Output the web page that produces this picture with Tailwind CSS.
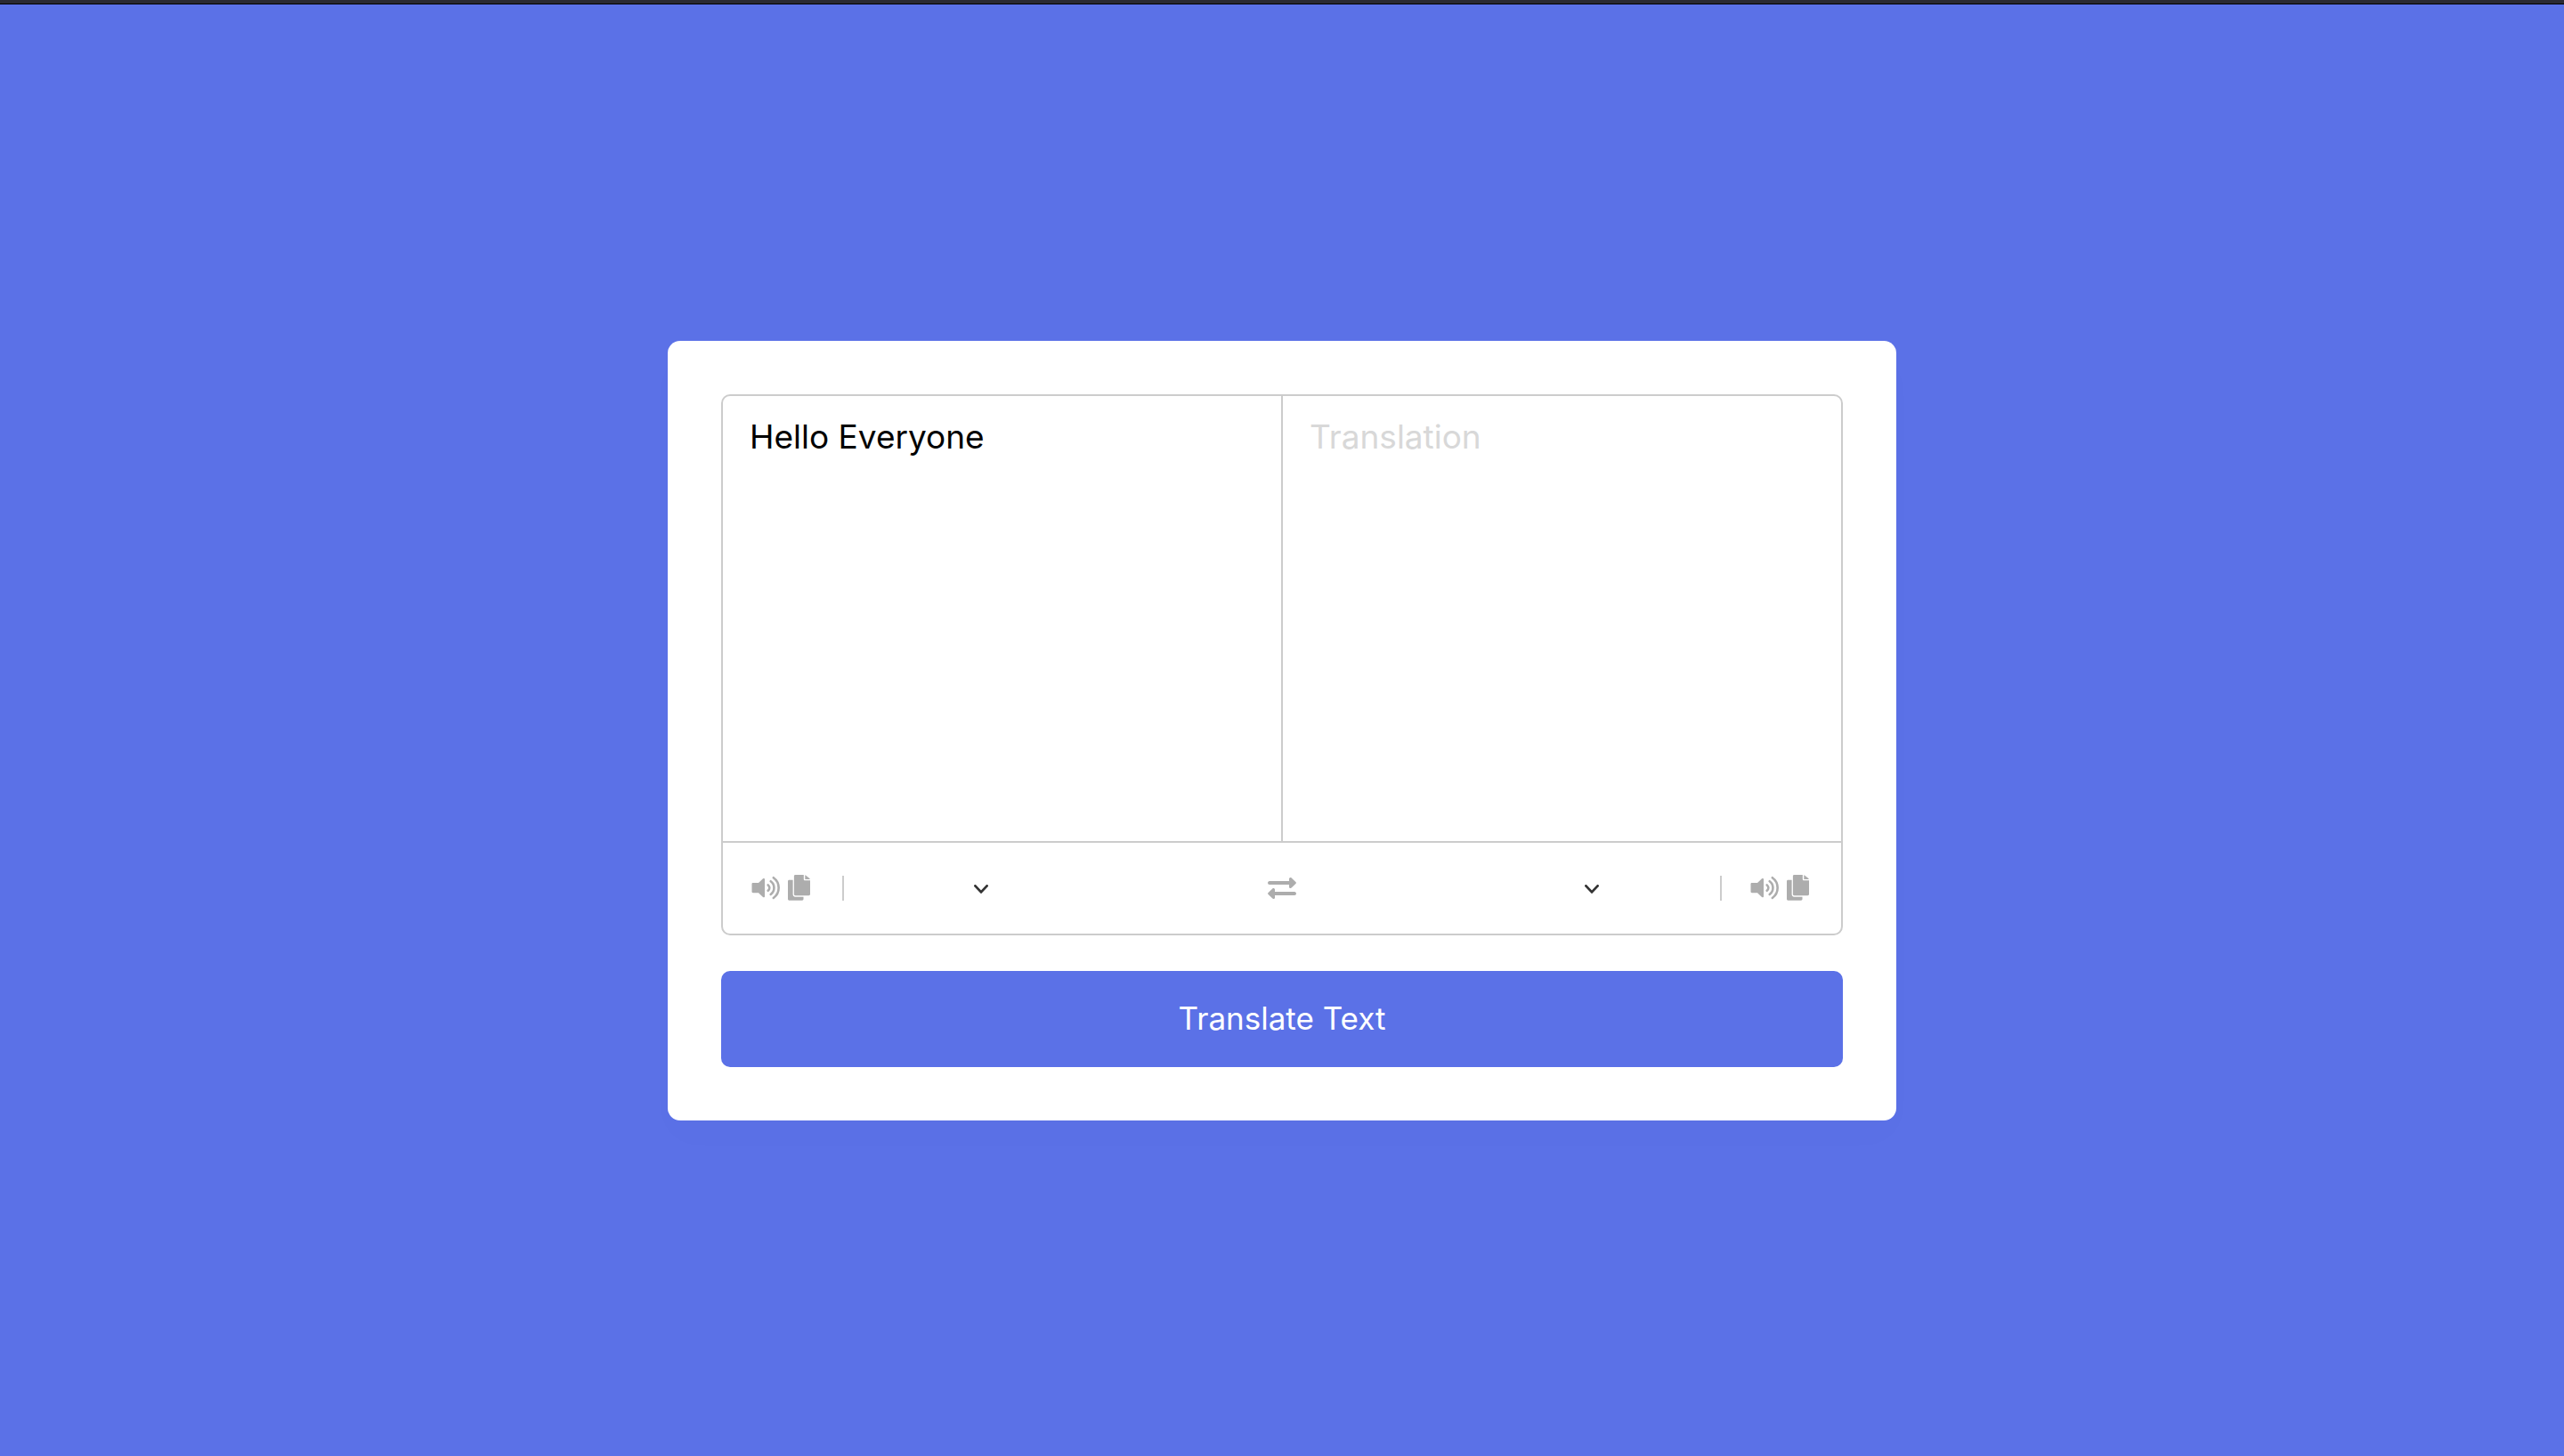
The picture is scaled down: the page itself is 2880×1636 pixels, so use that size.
<!DOCTYPE html>
<html lang="en">
<head>
<meta charset="utf-8">
<meta name="viewport" content="width=device-width, initial-scale=1">
<title>Translate Text</title>
<script src="https://cdn.jsdelivr.net/npm/@tailwindcss/browser@4"></script>
</head>
<body class="flex min-h-screen flex-col bg-[#5b71e7] font-['Inter',sans-serif]">
<svg class="hidden" aria-hidden="true">
  <symbol id="volume" viewBox="0 0 32 28">
    <path fill="currentColor" d="M1.8 8H8l5-4.7c.8-.7 2-.3 2 .7v19.2c0 1-1.200 1.400-2 .7L8 19.200H1.800c-.8 0-1.300-.5-1.300-1.200V9.200C.5 8.500 1 8 1.800 8z"/>
    <path fill="none" stroke="currentColor" stroke-width="2.600" stroke-linecap="round" d="M18.700 10.400c2.200 1.800 2.200 4.600 0 6.400M21.700 6.200c5 3.500 5 11.300 0 14.800M24.800 2.200c7.800 5.500 7.800 17.300 0 22.800"/>
  </symbol>
  <symbol id="copy" viewBox="0 0 25 29">
    <path fill="currentColor" d="M8.300 0h9.500v5c0 .8.500 1.300 1.300 1.300H25v15.500c0 .8-.6 1.400-1.400 1.400H8.300c-.8 0-1.400-.6-1.400-1.400V1.400C6.900.6 7.500 0 8.300 0z"/>
    <path fill="currentColor" d="M19.300.2c.4.100.7.300 1 .6l4 3.200c.3.300.4.600.5 1h-5.500z"/>
    <path fill="currentColor" d="M1.400 5.700h4.200v16.400c0 1.500 1.200 2.700 2.700 2.700h9.200v2.500c0 .8-.6 1.400-1.400 1.400H1.400C.6 28.700 0 28.100 0 27.300V7.100c0-.8.6-1.400 1.400-1.400z"/>
  </symbol>
  <symbol id="chevron" viewBox="0 0 16 10">
    <path fill="none" stroke="currentColor" stroke-width="2.800" stroke-linecap="round" stroke-linejoin="round" d="M1.400 1.400 8 8.400l6.600-7"/>
  </symbol>
</svg>
<div class="h-[5px] border-b border-black bg-[#2b2a33]"></div>
<main class="flex flex-1 items-center justify-center">
  <div class="w-full max-w-[1380px] rounded-[14px] bg-white p-[60px] shadow-[0_20px_40px_rgba(0,0,0,0.01)]">
    <div class="rounded-[10px] border-2 border-[#ccc]">
      <div class="flex h-[502px] border-b-2 border-[#ccc]">
        <textarea aria-label="Text to translate" spellcheck="false" class="flex-1 resize-none px-[30px] py-5 text-[37px] leading-[52px] text-black outline-none">Hello Everyone</textarea>
        <textarea aria-label="Translation" readonly placeholder="Translation" class="flex-1 resize-none border-l-2 border-[#ccc] px-[30px] py-5 text-[37px] leading-[52px] outline-none placeholder:text-[#d8d8d8]"></textarea>
      </div>
      <div class="grid h-[102px] grid-cols-[1fr_auto_1fr] items-center px-8 text-[#adadad]">
        <div class="flex items-center">
          <button type="button" aria-label="Listen to text"><svg class="h-7 w-8"><use href="#volume"/></svg></button>
          <button type="button" aria-label="Copy text" class="ml-[9px]"><svg class="h-[29px] w-[25px]"><use href="#copy"/></svg></button>
          <div class="relative ml-9 flex h-7 items-center border-l-2 border-[#ccc]">
            <select aria-label="Source language" class="h-7 w-[168px] appearance-none pr-8 text-[35px] text-[#333] outline-none"><option></option></select>
            <svg class="pointer-events-none absolute right-1.5 bottom-2 h-2.5 w-4 text-[#333]"><use href="#chevron"/></svg>
          </div>
        </div>
        <button type="button" aria-label="Swap languages">
          <svg class="h-[26px] w-8" viewBox="0 0 32 26">
            <path fill="currentColor" d="M2 5h22V2.600c0-1.500 1.700-2.100 2.700-1.200l4.700 4.500c.7.700.7 1.500 0 2.200l-4.700 4.500c-1 1-2.700.3-2.700-1.200V9H2C-.6 9-.6 5 2 5zM30 17H8v-2.400c0-1.500-1.700-2.100-2.700-1.200L.6 17.900c-.7.7-.7 1.500 0 2.200l4.700 4.500c1 1 2.700.3 2.700-1.200V21h22c2.600 0 2.600-4 0-4z"/>
          </svg>
        </button>
        <div class="flex items-center justify-end pr-1">
          <div class="relative flex h-7 items-center border-r-2 border-[#ccc] pr-[130px]">
            <select aria-label="Target language" class="h-7 w-[168px] appearance-none pr-8 text-[35px] text-[#333] outline-none"><option></option></select>
            <svg class="pointer-events-none absolute right-[136px] bottom-2 h-2.5 w-4 text-[#333]"><use href="#chevron"/></svg>
          </div>
          <button type="button" aria-label="Listen to translation" class="ml-8"><svg class="h-7 w-8"><use href="#volume"/></svg></button>
          <button type="button" aria-label="Copy translation" class="ml-[9px]"><svg class="h-[29px] w-[25px]"><use href="#copy"/></svg></button>
        </div>
      </div>
    </div>
    <button type="button" class="mt-10 h-[108px] w-full rounded-[10px] bg-[#5b71e7] text-[35px] text-white">Translate Text</button>
  </div>
</main>
</body>
</html>
